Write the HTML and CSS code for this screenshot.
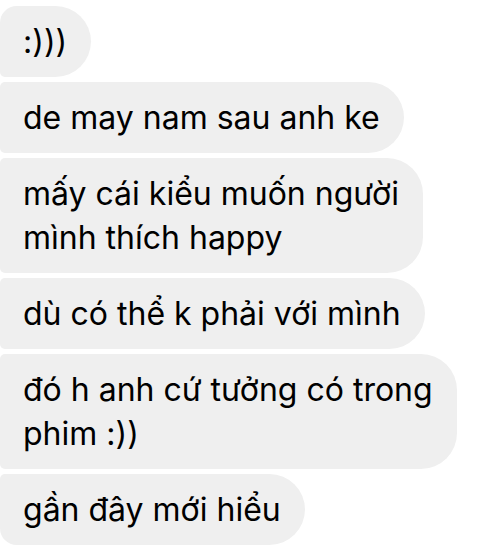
FILE: index.html
```html
<!DOCTYPE html>
<html lang="vi">
<head>
<meta charset="utf-8">
<title>Chat</title>
<link rel="stylesheet" href="styles.css">
</head>
<body>
<div class="thread">
  <div class="bubble first">:)))</div>
  <div class="bubble">de may nam sau anh ke</div>
  <div class="bubble">mấy cái kiểu muốn người<br>mình thích happy</div>
  <div class="bubble">dù có thể k phải với mình</div>
  <div class="bubble">đó h anh cứ tưởng có trong<br>phim :))</div>
  <div class="bubble last">gần đây mới hiểu</div>
</div>
</body>
</html>
```
FILE: styles.css
```css
html, body {
  margin: 0;
  padding: 0;
  background: #ffffff;
}

.thread {
  display: flex;
  flex-direction: column;
  align-items: flex-start;
  gap: 5px;
  padding-top: 6px;
}

.bubble {
  box-sizing: border-box;
  padding: 14px 24px 13px 23px;
  background: #efefef;
  color: #000000;
  font-family: Inter, "Noto Sans", sans-serif;
  font-size: 32px;
  line-height: 44px;
  white-space: nowrap;
  border-radius: 5px 36px 36px 5px;
}

.bubble.first {
  border-top-left-radius: 17px;
}

.bubble.last {
  border-bottom-left-radius: 17px;
}
```
